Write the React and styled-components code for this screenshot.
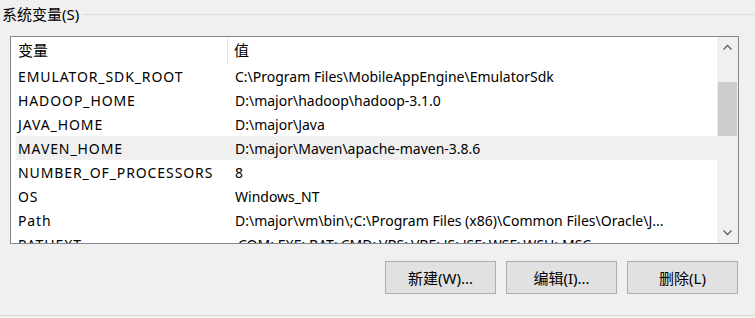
import React from "react";
import styled, { createGlobalStyle } from "styled-components";

const Global = createGlobalStyle`
  html, body { margin: 0; padding: 0; background: #f0f0f0; }
  body { width: 755px; height: 318px; overflow: hidden;
    font-family: "Noto Sans", "Noto Sans CJK SC", sans-serif; font-size: 14px; color: #000; }
`;

const Page = styled.div`
  width: 755px;
  height: 318px;
  display: flex;
  flex-direction: column;
  background: #f0f0f0;
`;

const GroupHeader = styled.div`
  display: flex;
  align-items: center;
  height: 28px;
  padding-left: 2px;
  gap: 3px;
`;

const GroupTitle = styled.span`
  font-size: 15px;
  line-height: 28px;
  white-space: nowrap;
`;

const GroupLine = styled.div`
  flex: 1;
  height: 1px;
  background: #dcdcdc;
`;

const ListBox = styled.div`
  margin: 8px 0 0 10px;
  width: 727px;
  height: 206px;
  border: 1px solid #828790;
  background: #fff;
  display: flex;
  overflow: hidden;
`;

const ListContent = styled.div`
  flex: 1;
  display: flex;
  flex-direction: column;
  overflow: hidden;
`;

const HeaderRow = styled.div`
  display: grid;
  grid-template-columns: 217px 1fr;
  height: 27px;
  flex: none;
`;

const HeaderCell = styled.div`
  padding-left: ${(p) => p.$pad}px;
  line-height: 27px;
  font-size: 15px;
  border-right: ${(p) => (p.$sep ? "1px solid #e5e5e5" : "none")};
  white-space: nowrap;
`;

const Row = styled.div`
  display: grid;
  grid-template-columns: 212px 1fr;
  height: 24px;
  flex: none;
  margin-left: 5px;
  background: ${(p) => (p.$selected ? "#f0f0f0" : "transparent")};
`;

const Cell = styled.div`
  padding-left: ${(p) => p.$pad}px;
  line-height: 25px;
  letter-spacing: ${(p) => p.$spacing || 0}px;
  white-space: nowrap;
  overflow: hidden;
`;

const ScrollBar = styled.div`
  width: 21px;
  flex: none;
  background: #f0f0f0;
  display: flex;
  flex-direction: column;
  align-items: center;
`;

const ArrowBtn = styled.div`
  width: 21px;
  height: 20px;
  flex: none;
  display: flex;
  align-items: center;
  justify-content: center;
`;

const Track = styled.div`
  flex: 1;
  width: 19px;
  padding-top: 25px;
`;

const Thumb = styled.div`
  width: 19px;
  height: 54px;
  background: #cdcdcd;
`;

const ButtonRow = styled.div`
  display: flex;
  justify-content: flex-end;
  gap: 10px;
  margin: 17px 17px 0 0;
`;

const Button = styled.button`
  width: 111px;
  height: 33px;
  box-sizing: border-box;
  background: #e1e1e1;
  border: 1px solid #adadad;
  font-family: "Noto Sans", "Noto Sans CJK SC", sans-serif;
  font-size: 15px;
  color: #000;
  padding: 0;
`;

const BottomLine = styled.div`
  margin-top: auto;
  height: 1px;
  background: #dadada;
  margin-bottom: 2px;
`;

const Chevron = ({ up }) => (
  <svg width="9" height="6" viewBox="0 0 9 6">
    <path
      d={up ? "M0.5 5.5 L4.5 1.5 L8.5 5.5" : "M0.5 0.5 L4.5 4.5 L8.5 0.5"}
      fill="none"
      stroke="#606060"
      strokeWidth="1.3"
    />
  </svg>
);

const rows = [
  ["EMULATOR_SDK_ROOT", "C:\\Program Files\\MobileAppEngine\\EmulatorSdk"],
  ["HADOOP_HOME", "D:\\major\\hadoop\\hadoop-3.1.0"],
  ["JAVA_HOME", "D:\\major\\Java"],
  ["MAVEN_HOME", "D:\\major\\Maven\\apache-maven-3.8.6"],
  ["NUMBER_OF_PROCESSORS", "8"],
  ["OS", "Windows_NT"],
  ["Path", "D:\\major\\vm\\bin\\;C:\\Program Files (x86)\\Common Files\\Oracle\\J..."],
  ["PATHEXT", ".COM;.EXE;.BAT;.CMD;.VBS;.VBE;.JS;.JSE;.WSF;.WSH;.MSC"],
];

export default function App() {
  return (
    <Page>
      <Global />
      <GroupHeader>
        <GroupTitle>系统变量(S)</GroupTitle>
        <GroupLine />
      </GroupHeader>
      <ListBox>
        <ListContent>
          <HeaderRow>
            <HeaderCell $pad={7} $sep>变量</HeaderCell>
            <HeaderCell $pad={6}>值</HeaderCell>
          </HeaderRow>
          {rows.map(([k, v]) => (
            <Row key={k} $selected={k === "MAVEN_HOME"}>
              <Cell $pad={2} $spacing={0.9}>{k}</Cell>
              <Cell $pad={7}>{v}</Cell>
            </Row>
          ))}
        </ListContent>
        <ScrollBar>
          <ArrowBtn><Chevron up /></ArrowBtn>
          <Track><Thumb /></Track>
          <ArrowBtn><Chevron /></ArrowBtn>
        </ScrollBar>
      </ListBox>
      <ButtonRow>
        <Button>新建(W)...</Button>
        <Button>编辑(I)...</Button>
        <Button>删除(L)</Button>
      </ButtonRow>
      <BottomLine />
    </Page>
  );
}
